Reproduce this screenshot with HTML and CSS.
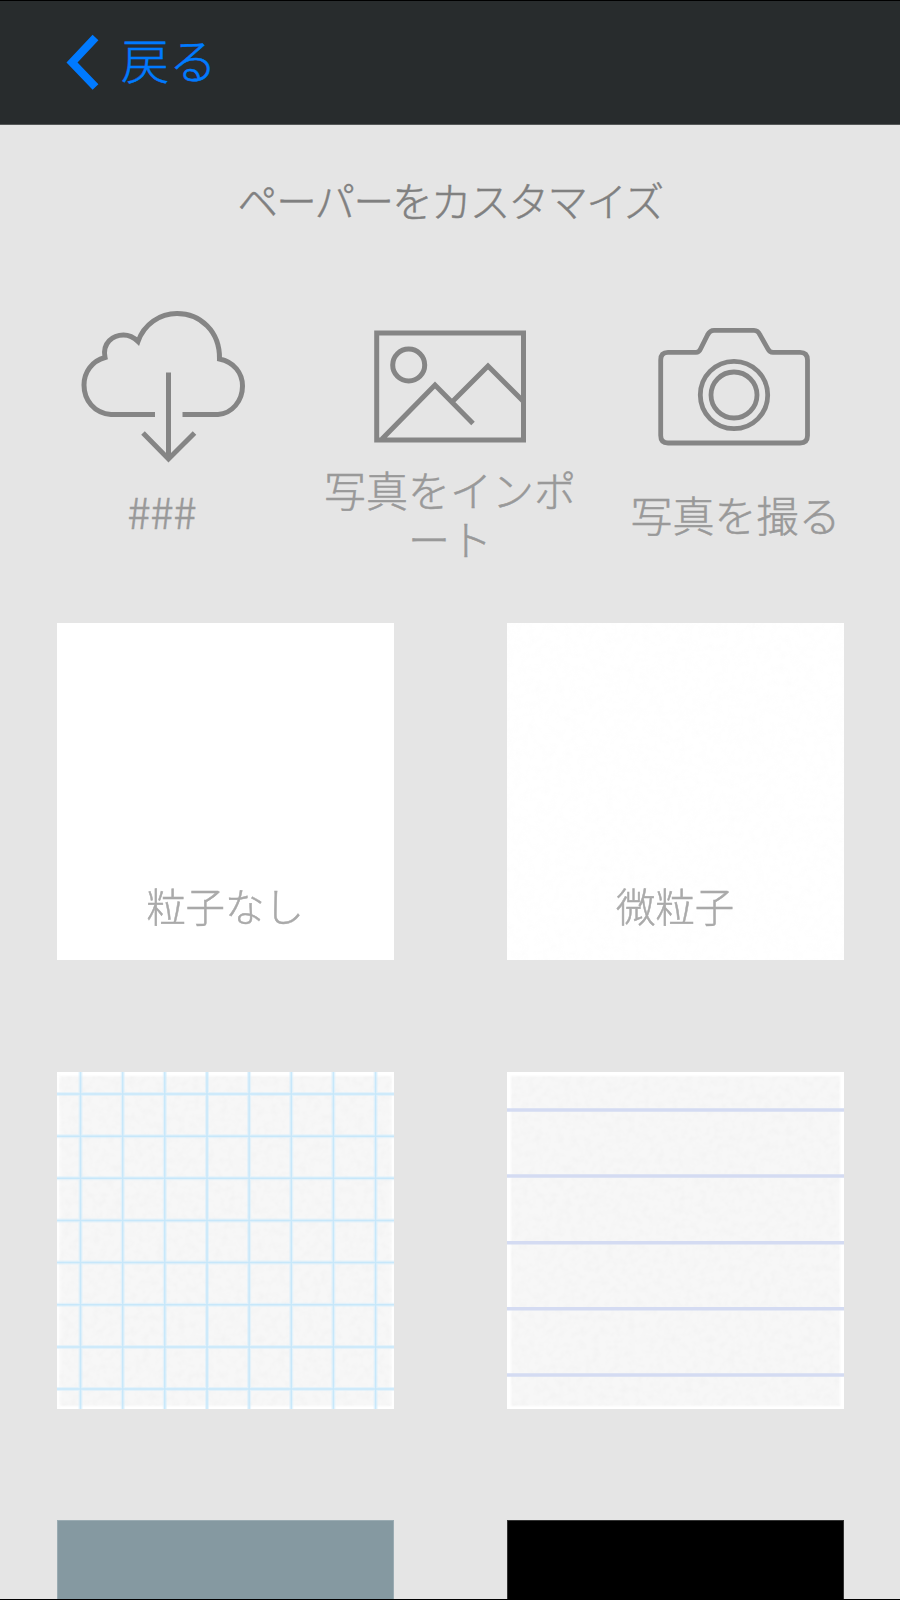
FILE: index.html
```
<!DOCTYPE html>
<html lang="ja">
<head>
<meta charset="utf-8">
<title>ペーパーをカスタマイズ</title>
<link rel="stylesheet" href="styles.css">
</head>
<body>
<div class="screen">
  <header class="bar">
    <a class="back">
      <svg class="chevron" width="36" height="58" viewBox="0 0 36 58"><path d="M29.5 3.5 6 28.5 29.5 53"/></svg>
      <span class="back-label">戻る</span>
    </a>
  </header>
  <main>
    <h1 class="title">ペーパーをカスタマイズ</h1>
    <section class="tools">
      <div class="tool tool-cloud">
        <svg class="icon" width="180" height="170" viewBox="72 300 180 170">
          <path d="M155 414.5H111C94 413 84 400 84 385C84 372 92 361 105 357.500C102 343 113 335 123.500 335C129 335 134 337.500 138 341.500C144 324 160 313.500 177 313.500C200 313.500 220 331 219.500 359C234 362 242.500 373 242.500 386C242.500 401 232 413.500 218 414.500H182.500"/>
          <path d="M168.500 372.500V459M143 433 168.500 459 194.500 433"/>
        </svg>
        <span class="caption">###</span>
      </div>
      <div class="tool tool-photo">
        <svg class="icon" width="180" height="170" viewBox="360 300 180 170">
          <path d="M376.700 333H523.500V440H376.700ZM382 439 435 385 473 423.500M453 401 488 366 523 401"/>
          <circle cx="408.700" cy="365" r="16"/>
        </svg>
        <span class="caption">写真をインポ<br>ート</span>
      </div>
      <div class="tool tool-camera">
        <svg class="icon thin" width="180" height="170" viewBox="644 300 180 170">
          <path d="M668 352.300H696Q699 352.300 700.500 349L707.500 335Q710 330.300 714 330.300H754Q758 330.300 760 335L768 349Q769.500 352.300 773 352.300H800Q807.500 352.300 807.500 360V435.500Q807.500 443 800 443H668Q660.700 443 660.700 435.500V360Q660.700 352.300 668 352.300Z"/>
          <circle cx="734" cy="395" r="33.700"/><circle cx="734" cy="395" r="23"/>
        </svg>
        <span class="caption">写真を撮る</span>
      </div>
    </section>
    <section class="papers">
      <div class="paper plain"><span class="name">粒子なし</span></div>
      <div class="paper fine">
        <svg class="sheet" viewBox="0 0 337 337"><defs><filter id="grain" x="0" y="0" width="1" height="1"><feTurbulence type="fractalNoise" baseFrequency=".14" numOctaves="2"/><feColorMatrix values="0 0 0 0 .4  0 0 0 0 .4  0 0 0 0 .4  .1 0 0 0 -.04"/></filter></defs><rect class="noise faint" width="337" height="337"/></svg>
        <span class="name">微粒子</span>
      </div>
      <div class="paper graph">
        <svg class="sheet" viewBox="0 0 337 337"><rect class="base" x="2.500" y="4" width="332" height="330"/><rect class="noise" x="2.500" y="4" width="332" height="330"/>
          <path class="soft" d="M23.500 0V337M65.700 0V337M107.800 0V337M150 0V337M192.100 0V337M234.300 0V337M276.400 0V337M318.600 0V337M0 22H337M0 64.200H337M0 106.300H337M0 148.500H337M0 190.600H337M0 232.800H337M0 274.900H337M0 317.100H337"/>
          <path class="line" d="M23.500 0V337M65.700 0V337M107.800 0V337M150 0V337M192.100 0V337M234.300 0V337M276.400 0V337M318.600 0V337M0 22H337M0 64.200H337M0 106.300H337M0 148.500H337M0 190.600H337M0 232.800H337M0 274.900H337M0 317.100H337"/></svg>
      </div>
      <div class="paper ruled">
        <svg class="sheet" viewBox="0 0 337 337"><rect class="base" x="4" y="4" width="329" height="330"/><rect class="noise" x="4" y="4" width="329" height="330"/>
          <path class="rule" d="M0 38H337M0 104H337M0 170.800H337M0 236.700H337M0 303H337"/></svg>
      </div>
      <div class="paper slate"></div>
      <div class="paper black"></div>
    </section>
  </main>
</div>
</body>
</html>
```

FILE: styles.css
```
* { box-sizing: border-box; }
body { margin: 0; background: #e5e5e5; font-family: "Noto Sans CJK JP", sans-serif; font-weight: 300; -webkit-text-stroke: .5px currentColor; }
.screen { width: 900px; height: 1600px; overflow: hidden; display: flex; flex-direction: column; border-bottom: 1px solid #000; }
.bar { height: 125px; flex: none; background: #282c2d; border-top: 1px solid #000; border-bottom: 1px solid #555858; padding: 33px 0 0 66px; }
.back { display: flex; gap: 19px; color: #007aff; }
.chevron { fill: none; stroke: #007aff; stroke-width: 8; filter: blur(.5px); }
.back-label { font-size: 48px; line-height: 54px; margin-top: -3px; }
main { flex: 1; min-height: 0; overflow: hidden; }
.title { margin: 0; padding-top: 47px; height: 175px; font-size: 40.500px; line-height: 56px; font-weight: 300; letter-spacing: -1.700px; text-align: center; color: #808080; }
.tools { height: 323px; display: grid; grid-template-columns: 324px 252px 324px; }
.tool { display: flex; flex-direction: column; align-items: center; color: #999; }
.icon { display: block; fill: none; stroke: #858585; stroke-width: 5; filter: blur(.5px); }
.icon.thin { stroke-width: 4.800; }
.tool-camera { padding-right: 8px; }
.caption { font-size: 42px; line-height: 49px; text-align: center; white-space: nowrap; padding-top: 19px; }
.tool-cloud .caption { padding-top: 16px; font-size: 43px; }
.tool-camera .caption { margin-left: 3px; }
.tool-photo .caption { padding-top: 0; margin-top: -6px; }
.papers { display: grid; grid-template-columns: 337px 337px; grid-auto-rows: 337px; column-gap: 113px; row-gap: 111.500px; padding-left: 56.500px; }
.paper { display: grid; background: #fff; filter: blur(.4px); }
.paper > * { grid-area: 1 / 1; }
.name { align-self: end; justify-self: center; padding-bottom: 27px; font-size: 39.400px; line-height: 56px; color: #aaa; z-index: 1; }
.sheet { display: block; width: 337px; height: 337px; }
.base { fill: #f7f7f7; filter: blur(1px); }
.noise { filter: url(#grain); }
.faint { opacity: .4; }
.soft { stroke: #d9effc; stroke-width: 4; opacity: .6; filter: blur(.6px); }
.line { stroke: #bce4fb; stroke-width: 1.500; opacity: .7; }
.rule { stroke: #d4dbf2; stroke-width: 3.500; }
.slate { background: #8599a1; border: 1px solid #9aabb2; }
.black { background: #000; border: 1px solid #333; }
```
